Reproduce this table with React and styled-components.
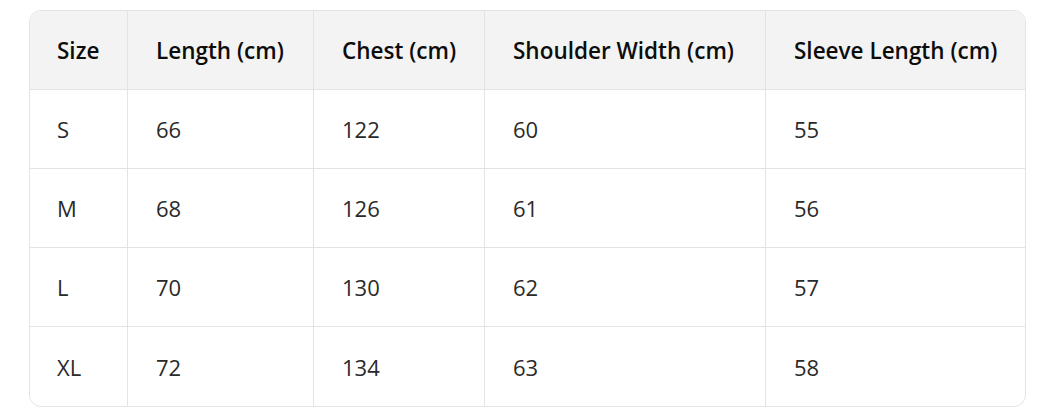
import React from "react";
import styled, { createGlobalStyle } from "styled-components";

const Global = createGlobalStyle`
  html, body { margin: 0; padding: 0; background: #ffffff; }
  body { font-family: "Open Sans", "Noto Sans", sans-serif; }
`;

const Page = styled.div`
  padding: 10px 18px 0 29px;
`;

const Frame = styled.div`
  width: 997px;
  box-sizing: border-box;
  border: 1px solid #e3e3e3;
  border-radius: 12px;
  overflow: hidden;
`;

const Table = styled.table`
  width: 100%;
  border-collapse: separate;
  border-spacing: 0;
  table-layout: fixed;
`;

const Head = styled.th`
  background: #f3f3f3;
  color: #0d0d0d;
  font-weight: 600;
  font-size: 22.5px;
  text-align: left;
  height: 79px;
  padding: 0 0 0 ${(p) => (p.$first ? 27 : 28)}px;
  box-sizing: border-box;
  border-bottom: 1px solid #e3e3e3;
  border-right: ${(p) => (p.$last ? "none" : "1px solid #e3e3e3")};
  white-space: nowrap;
`;

const Cell = styled.td`
  color: #2a2a2a;
  font-weight: 400;
  font-size: 22px;
  height: 79px;
  padding: 0 0 0 ${(p) => (p.$first ? 27 : 28)}px;
  box-sizing: border-box;
  border-bottom: ${(p) => (p.$lastRow ? "none" : "1px solid #e3e3e3")};
  border-right: ${(p) => (p.$last ? "none" : "1px solid #e3e3e3")};
`;

const cols = [
  { label: "Size", width: 98 },
  { label: "Length (cm)", width: 186 },
  { label: "Chest (cm)", width: 171 },
  { label: "Shoulder Width (cm)", width: 281 },
  { label: "Sleeve Length (cm)", width: 259 },
];

const rows = [
  ["S", "66", "122", "60", "55"],
  ["M", "68", "126", "61", "56"],
  ["L", "70", "130", "62", "57"],
  ["XL", "72", "134", "63", "58"],
];

export default function App() {
  return (
    <Page>
      <Global />
      <Frame>
        <Table>
          <colgroup>
            {cols.map((c) => (
              <col key={c.label} style={{ width: c.width }} />
            ))}
          </colgroup>
          <thead>
            <tr>
              {cols.map((c, i) => (
                <Head key={c.label} $first={i === 0} $last={i === cols.length - 1}>
                  {c.label}
                </Head>
              ))}
            </tr>
          </thead>
          <tbody>
            {rows.map((r, ri) => (
              <tr key={r[0]}>
                {r.map((v, i) => (
                  <Cell
                    key={i}
                    $first={i === 0}
                    $last={i === r.length - 1}
                    $lastRow={ri === rows.length - 1}
                  >
                    {v}
                  </Cell>
                ))}
              </tr>
            ))}
          </tbody>
        </Table>
      </Frame>
    </Page>
  );
}
